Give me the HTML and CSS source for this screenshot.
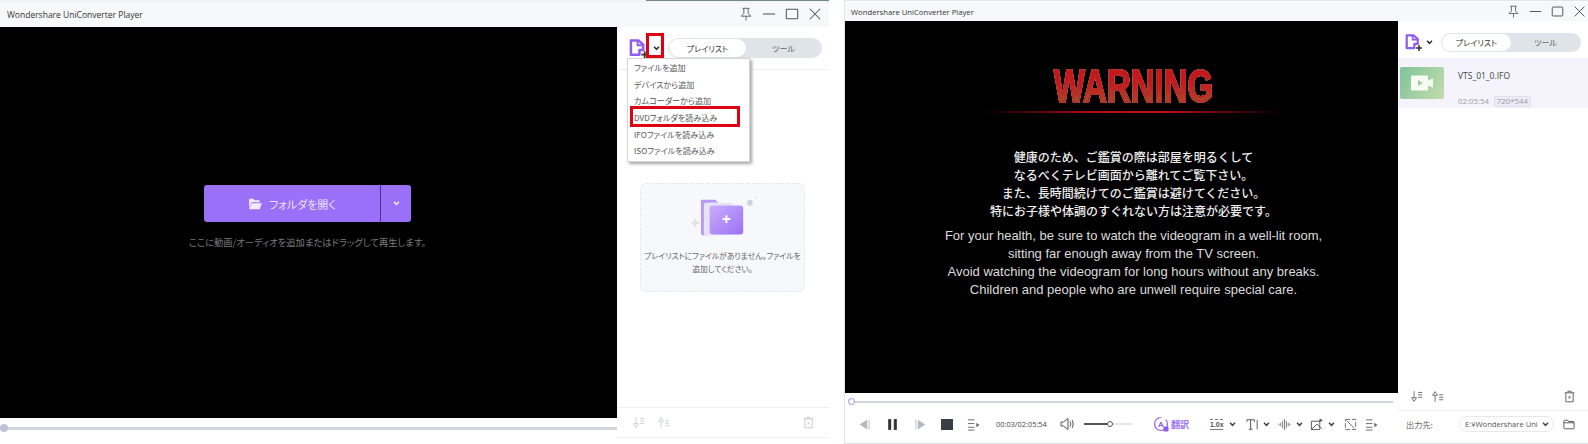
FILE: index.html
```html
<!DOCTYPE html>
<html lang="ja">
<head>
<meta charset="utf-8">
<title>Wondershare UniConverter Player</title>
<link rel="stylesheet" href="styles.css">
</head>
<body>
<svg class="sprite" aria-hidden="true">
  <symbol id="pin" viewBox="0 0 16 16"><path d="M4 1.500h8M5.500 1.500v6L2.500 10.500h11l-3-3v-6M8 10.500v5" fill="none" stroke="currentColor" stroke-width="1"/></symbol>
  <symbol id="min" viewBox="0 0 16 16"><path d="M1 8h14" stroke="currentColor" stroke-width="1.200"/></symbol>
  <symbol id="max" viewBox="0 0 16 16"><rect x="1.500" y="2.500" width="13" height="11" rx="1" fill="none" stroke="currentColor" stroke-width="1.200"/></symbol>
  <symbol id="close" viewBox="0 0 16 16"><path d="M2 2l12 12M14 2L2 14" stroke="currentColor" stroke-width="1.200"/></symbol>
  <symbol id="addfile" viewBox="0 0 20 20"><path d="M2 1.500h8l5 4.500v5.500h-4v5H2z" fill="none" stroke="#8f5cf0" stroke-width="2.600" stroke-linejoin="round"/><path d="M9 2v4.500h5" fill="none" stroke="#8f5cf0" stroke-width="2"/><path d="M13 16.500h7M16.500 13v7" stroke="#333" stroke-width="1.800"/></symbol>
  <symbol id="caret" viewBox="0 0 8 6"><path d="M1 1l3 3 3-3" fill="none" stroke="currentColor" stroke-width="1.800"/></symbol>
  <symbol id="sortdown" viewBox="0 0 16 16"><path d="M5 1.500v8M2 9.500h6L5 14z" fill="none" stroke="currentColor" stroke-width="1"/><path d="M10 3h5M10 6h5M10 9h5" stroke="currentColor" stroke-width="1"/></symbol>
  <symbol id="sortup" viewBox="0 0 16 16"><path d="M5 14.500v-8M2 6.500h6L5 2z" fill="none" stroke="currentColor" stroke-width="1"/><path d="M10 6h5M10 9h5M10 12h5" stroke="currentColor" stroke-width="1"/></symbol>
  <symbol id="trash" viewBox="0 0 16 16"><path d="M2 3.500h12M6 3.500V1.500h4v2M3.500 3.500v11h9v-11" fill="none" stroke="currentColor" stroke-width="1.100"/><path d="M6.800 7.500l2.400 3M9.200 7.500l-2.400 3" stroke="currentColor" stroke-width="1"/></symbol>
  <symbol id="list" viewBox="0 0 14 14"><path d="M1 2h7M1 6h7M1 10h7M1 13h7" stroke="currentColor" stroke-width="1"/><path d="M10 5l3.500 2.500L10 10z" fill="currentColor"/></symbol>
</svg>

<section class="window window-left">
  <div class="top-strip"><span class="strip-dark"></span></div>
  <header class="titlebar titlebar-left">
    <span class="app-title">Wondershare UniConverter Player</span>
    <div class="win-btns">
      <svg class="win-ico"><use href="#pin"/></svg>
      <svg class="win-ico"><use href="#min"/></svg>
      <svg class="win-ico"><use href="#max"/></svg>
      <svg class="win-ico"><use href="#close"/></svg>
    </div>
  </header>
  <div class="win-body">
    <div class="main main-left">
      <div class="video video-left">
        <div class="open-btn">
          <span class="open-main">
            <svg class="folder-ico" viewBox="0 0 16 14"><path d="M1 2.500c0-.800.500-1.500 1.300-1.500h3.700l1.500 1.500h5c.700 0 1 .500 1 1V5H4L1 11z" fill="#efeafc"/><path d="M3.800 6H16l-2.500 7H1z" fill="#efeafc"/></svg>
            フォルダを開く
          </span>
          <span class="open-drop"><svg class="caret-white"><use href="#caret"/></svg></span>
        </div>
        <p class="drop-hint">ここに動画/オーディオを追加またはドラッグして再生します。</p>
      </div>
      <div class="progress progress-left"><span class="knob-grey"></span></div>
    </div>
    <aside class="side side-left">
      <div class="side-head side-head-left">
        <svg class="add-ico"><use href="#addfile"/></svg>
        <svg class="caret-dark"><use href="#caret"/></svg>
        <div class="pill pill-left">
          <span class="pill-on">プレイリスト</span>
          <span class="pill-off">ツール</span>
        </div>
      </div>
      <div class="side-fill side-fill-left">
        <div class="empty-card">
          <svg class="empty-art" viewBox="0 0 70 50">
            <defs><linearGradient id="fg" x1="0" y1="0" x2="1" y2="1"><stop offset="0" stop-color="#c9aefb"/><stop offset="1" stop-color="#9a70f5"/></linearGradient></defs>
            <path d="M11 4h15l3 3h-10v34h-6c-1 0-2-1-2-2z" fill="#b79af5"/>
            <rect x="14" y="7" width="30" height="34" rx="2" fill="#e6e3f5"/>
            <rect x="20" y="10" width="35" height="30" rx="3" fill="url(#fg)"/>
            <path d="M37.500 20v8M33.500 24h8" stroke="#fff" stroke-width="2"/>
            <circle cx="62" cy="7" r="3" fill="#cfd2dc"/><circle cx="68" cy="1.500" r="1" fill="#dfe1e8"/>
            <path d="M5 24v8M1 28h8" stroke="#dfe1e8" stroke-width="2.400"/>
          </svg>
          <p class="empty-text">プレイリストにファイルがありません。ファイルを<br>追加してください。</p>
        </div>
      </div>
      <div class="side-bar side-bar-left">
        <svg class="bar-ico"><use href="#sortdown"/></svg>
        <svg class="bar-ico"><use href="#sortup"/></svg>
        <svg class="bar-ico bar-end"><use href="#trash"/></svg>
      </div>
    </aside>
  </div>
  <ul class="menu">
    <li>ファイルを追加</li>
    <li>デバイスから追加</li>
    <li>カムコーダーから追加</li>
    <li>DVDフォルダを読み込み</li>
    <li>IFOファイルを読み込み</li>
    <li>ISOファイルを読み込み</li>
  </ul>
  <span class="mark mark-caret"></span>
  <span class="mark mark-item"></span>
</section>

<section class="window window-right">
  <header class="titlebar titlebar-right">
    <span class="app-title app-title-right">Wondershare UniConverter Player</span>
    <div class="win-btns win-btns-right">
      <svg class="win-ico"><use href="#pin"/></svg>
      <svg class="win-ico"><use href="#min"/></svg>
      <svg class="win-ico"><use href="#max"/></svg>
      <svg class="win-ico"><use href="#close"/></svg>
    </div>
  </header>
  <div class="win-body">
    <div class="main main-right">
      <div class="video video-right">
        <div class="warning"><span class="warning-word">WARNING</span></div>
        <div class="warning-line"></div>
        <p class="jp">健康のため、ご鑑賞の際は部屋を明るくして<br>なるべくテレビ画面から離れてご覧下さい。<br>また、長時間続けてのご鑑賞は避けてください。<br>特にお子様や体調のすぐれない方は注意が必要です。</p>
        <p class="en">For your health, be sure to watch the videogram in a well-lit room,<br>sitting far enough away from the TV screen.<br>Avoid watching the videogram for long hours without any breaks.<br>Children and people who are unwell require special care.</p>
      </div>
      <div class="progress progress-right"><span class="knob-ring"></span></div>
      <div class="controls">
        <svg class="c-ico c-prev" viewBox="0 0 12 12"><path d="M8.500 1.500v9L1.500 6z" fill="#b5b8c2"/><rect x="9.500" y="1.500" width="1.500" height="9" fill="#d5d7de"/></svg>
        <svg class="c-ico c-pause" viewBox="0 0 12 12"><rect x="2" y="1" width="2.800" height="10" fill="#34343c"/><rect x="7.200" y="1" width="2.800" height="10" fill="#34343c"/></svg>
        <svg class="c-ico c-next" viewBox="0 0 12 12"><path d="M3.500 1.500v9l7-4.500z" fill="#b5b8c2"/><rect x="1" y="1.500" width="1.500" height="9" fill="#d5d7de"/></svg>
        <span class="c-stop"></span>
        <svg class="c-ico c-list"><use href="#list"/></svg>
        <span class="time">00:03/02:05:54</span>
        <svg class="c-ico c-vol" viewBox="0 0 14 14"><path d="M1 5h2.500L8 1.500v11L3.500 9H1z" fill="none" stroke="#555" stroke-width="1"/><path d="M10 4.500c1 1.500 1 3.500 0 5M12 3c1.500 2.500 1.500 5.500 0 8" fill="none" stroke="#555" stroke-width="1"/></svg>
        <div class="vol-track"><span class="vol-fill"></span><span class="vol-knob"></span></div>
        <svg class="c-trans" viewBox="0 0 16 16"><circle cx="8" cy="8" r="6.500" fill="none" stroke="#8f5cf0" stroke-width="1.200" stroke-dasharray="30 5"/><text x="8" y="10.500" class="c-trans-a">A</text><rect x="10.500" y="10.500" width="5" height="5" rx="1" fill="#8f5cf0"/></svg>
        <span class="trans-label">翻訳</span>
        <span class="speed">1.0x</span>
        <svg class="caret-ctrl caret-speed"><use href="#caret"/></svg>
        <svg class="c-ico c-t" viewBox="0 0 14 14"><path d="M1 2h8M5 2v10M3 12h4M1 2v2M9 2v2" fill="none" stroke="#555" stroke-width="1.100"/><path d="M12 2v10" stroke="#555"/></svg>
        <svg class="caret-ctrl"><use href="#caret"/></svg>
        <svg class="c-ico c-wave" viewBox="0 0 14 14"><path d="M1 6v2M3 5v4M5 3v8M7 1v12M9 3v8M11 5v4M13 6v2" stroke="#777" stroke-width="1"/></svg>
        <svg class="caret-ctrl caret-wave"><use href="#caret"/></svg>
        <svg class="c-ico c-crop" viewBox="0 0 14 14"><path d="M1.500 3.500h9v9h-9zM1.500 12.500l6-6 5 5" fill="none" stroke="#555" stroke-width="1"/><circle cx="11.500" cy="2.500" r="1.500" fill="#555"/></svg>
        <svg class="caret-ctrl caret-wave"><use href="#caret"/></svg>
        <svg class="c-ico c-full" viewBox="0 0 14 14"><path d="M1.500 1.500h11v11h-11z" fill="none" stroke="#666" stroke-width="1" stroke-dasharray="5 2"/><path d="M3 3l8 8" stroke="#666"/></svg>
        <svg class="c-ico c-list2"><use href="#list"/></svg>
      </div>
    </div>
    <aside class="side side-right">
      <div class="side-head side-head-right">
        <svg class="add-ico add-ico-right"><use href="#addfile"/></svg>
        <svg class="caret-dark"><use href="#caret"/></svg>
        <div class="pill pill-right">
          <span class="pill-on">プレイリスト</span>
          <span class="pill-off">ツール</span>
        </div>
      </div>
      <div class="item">
        <div class="thumb">
          <svg class="thumb-ico" viewBox="0 0 24 16"><path d="M1 1.500c0-.500.500-1 1-1h15c.500 0 1 .500 1 1v4l5-2v9l-5-2v4c0 .500-.500 1-1 1H2c-.500 0-1-.500-1-1z" fill="#f6fbf3"/><path d="M8 5l5 3-5 3z" fill="#9ccfa6"/></svg>
        </div>
        <div class="item-info">
          <div class="item-name">VTS_01_0.IFO</div>
          <div class="item-meta"><span>02:05:54</span><span class="item-tag">720*544</span></div>
        </div>
      </div>
      <div class="side-fill"></div>
      <div class="side-bar side-bar-right">
        <svg class="bar-ico"><use href="#sortdown"/></svg>
        <svg class="bar-ico"><use href="#sortup"/></svg>
        <svg class="bar-ico bar-end"><use href="#trash"/></svg>
      </div>
      <div class="output">
        <span class="out-label">出力先:</span>
        <div class="out-select"><span class="out-path">E:¥Wondershare Uni</span><svg class="caret-ctrl"><use href="#caret"/></svg></div>
        <svg class="out-folder" viewBox="0 0 14 12"><path d="M1 2c0-.500.500-1 1-1h3.500l1 1.500H12c.500 0 1 .500 1 1V10c0 .500-.500 1-1 1H2c-.500 0-1-.500-1-1zM1 4h12" fill="none" stroke="#444" stroke-width="1"/></svg>
      </div>
    </aside>
  </div>
</section>
</body>
</html>
```

FILE: styles.css
```css
* { box-sizing: border-box; }
html, body { margin: 0; padding: 0; }
body {
  width: 1588px;
  height: 444px;
  display: flex;
  overflow: hidden;
  background: #fff;
  font-family: "Noto Sans CJK JP", "Open Sans", sans-serif;
  font-feature-settings: "palt";
  color: #555;
}
.sprite { width: 0; height: 0; position: absolute; }

.window { position: relative; display: flex; flex-direction: column; }
.window-left { width: 829px; height: 441px; }
.window-right { width: 744px; height: 444px; margin-left: 15px; padding-top: 1px; border-bottom: 1px solid #dfe1ea; border-left: 1px solid #e2e4ec; border-top: 1px solid #e2e4ec; }

.top-strip { height: 3px; background: #f3f3f4; display: flex; }
.strip-dark { width: 183px; height: 1px; margin-left: 646px; background: #6d8a88; }

.titlebar { display: flex; align-items: center; justify-content: space-between; background: #f7f8fa; flex: none; }
.titlebar-left { height: 24px; padding: 0 7px 2px 7px; }
.titlebar-right { height: 19px; padding: 0 2px 0 6px; }
.app-title { font-family: "Open Sans", sans-serif; font-size: 8.500px; color: #333; white-space: nowrap; }
.app-title-right { font-size: 7.700px; }
.win-btns { display: flex; align-items: center; gap: 9px; color: #555; }
.win-ico { width: 14px; height: 14px; }
.win-btns-right { gap: 9px; }
.win-btns-right .win-ico { width: 13px; height: 13px; }

.win-body { flex: 1; display: flex; min-height: 0; }
.main { display: flex; flex-direction: column; flex: none; }
.main-left { width: 617px; }
.main-right { width: 553px; }
.video { background: #000; flex: none; display: flex; flex-direction: column; align-items: center; }
.video-left { height: 391px; padding: 158px 2px 0 0; }
.video-right { height: 372px; padding-left: 24px; }

.open-btn { display: flex; width: 207px; height: 37px; border-radius: 3px; overflow: hidden; background: #9a70f8; }
.open-main { flex: 1; display: flex; align-items: center; justify-content: center; gap: 7px; color: #e9e2fb; font-size: 11px; border-right: 1px solid #4c3487; }
.folder-ico { width: 14px; height: 12px; }
.open-drop { width: 30px; display: flex; align-items: center; justify-content: center; }
.caret-white { width: 7px; height: 5px; color: #efe9fc; }
.drop-hint { margin: 13px 0 0; font-size: 9.300px; line-height: 14px; color: #7a7a7a; white-space: nowrap; }

.progress { flex: none; position: relative; display: flex; align-items: center; }
.progress-left { height: 20px; }
.progress-left::before { content: ""; flex: 1; height: 3px; background: #d4d4e0; }
.knob-grey { position: absolute; left: 0; top: 6px; width: 8px; height: 8px; border-radius: 50%; background: #c2c2d6; }
.progress-right { height: 17px; padding: 0 5px 0 5px; }
.progress-right::before { content: ""; flex: 1; height: 2px; background: #d4d5e2; }
.knob-ring { position: absolute; left: 3px; top: 5px; width: 7px; height: 7px; border-radius: 50%; background: #fff; border: 1px solid #a58de0; }

.side { flex: 1; display: flex; flex-direction: column; background: #fff; min-width: 0; }
.side-head { display: flex; align-items: center; flex: none; }
.side-head-left { height: 43px; padding-left: 12px; border-bottom: 1px solid #eff0f3; }
.side-head-right { height: 42px; padding-left: 7px; }
.add-ico { width: 19px; height: 19px; flex: none; }
.add-ico-right { width: 17px; height: 17px; }
.caret-dark { width: 7px; height: 5px; margin-left: 5px; color: #333; flex: none; }
.side-head-right .caret-dark { margin-left: 4px; }
.pill { display: flex; background: #dfe3ea; border-radius: 11px; font-size: 8px; color: #666; flex: none; align-items: stretch; padding: 1px; }
.pill span { display: flex; align-items: center; justify-content: center; }
.pill-on { background: #fff; border-radius: 10px; color: #333; }
.pill-off { flex: 1; }
.pill-left { width: 154px; height: 20px; margin-left: 8px; }
.pill-left .pill-on { width: 77px; }
.pill-right { width: 140px; height: 19px; margin-left: 8px; }
.pill-right .pill-on { width: 69px; }

.side-fill { flex: 1; min-height: 0; }
.side-fill-left { padding: 113px 24px 0 23px; }
.empty-card { height: 109px; background: #f7f8fb; border: 1px dashed #e5e7ee; border-radius: 6px; display: flex; flex-direction: column; align-items: center; padding-top: 12px; }
.empty-art { width: 70px; height: 48px; margin-left: 3px; flex: none; }
.empty-text { margin: 5px 0 0; font-size: 7.800px; line-height: 13px; text-align: center; color: #666; white-space: nowrap; }

.side-bar { flex: none; display: flex; align-items: center; }
.side-bar-left { height: 31px; margin-bottom: 3px; gap: 12px; padding: 0 14px 0 15px; border-top: 1px solid #eff0f3; border-bottom: 1px solid #eff0f3; color: #c2c5ce; }
.side-bar-right { height: 27px; gap: 8px; padding: 0 12px 2px 12px; border-bottom: 1px solid #eff0f3; color: #555; }
.bar-ico { width: 13px; height: 13px; flex: none; }
.bar-end { margin-left: auto; }

.menu { position: absolute; left: 627px; top: 58px; width: 123px; height: 104px; margin: 0; padding: 1px 0 0; list-style: none; background: #fff; border: 1px solid #d6d6d6; box-shadow: 2px 2px 3px rgba(0,0,0,.35); z-index: 2; }
.menu li { height: 16.700px; line-height: 16.700px; padding-left: 6px; font-size: 8.100px; color: #555; white-space: nowrap; }
.mark { position: absolute; border: 3px solid #e00012; z-index: 3; }
.mark-caret { left: 646px; top: 33px; width: 18px; height: 25px; }
.mark-item { left: 630px; top: 106px; width: 110px; height: 21px; }

.warning { margin-top: 46px; height: 37px; width: 100%; display: flex; justify-content: center; }
.warning-word {
  font-family: "Liberation Sans", sans-serif;
  font-weight: 700;
  font-size: 33px;
  line-height: 37px;
  display: block;
  transform: scaleY(1.420);
  background: linear-gradient(#c5151c 0%, #c5191d 45%, #a84a2c 82%, #e8e0dc 90%);
  -webkit-background-clip: text;
  background-clip: text;
  color: transparent;
  -webkit-text-stroke: 1px #b5271f;
  filter: drop-shadow(0 .7px 0 #d8d0cc);
}
.warning-line { width: 300px; height: 2px; margin-top: 7px; background: linear-gradient(90deg, transparent, #b00c12 35%, #c40f15 60%, transparent); }
.jp { margin: 35px 0 0; font-feature-settings: normal; font-size: 12px; font-weight: 500; line-height: 18px; color: #eee; text-align: center; white-space: nowrap; }
.en { margin: 7px 0 0; font-family: "Liberation Sans", sans-serif; font-size: 13px; line-height: 18px; color: #dcdcdc; text-align: center; white-space: nowrap; }

.controls { flex: 1; display: flex; align-items: center; background: #fff; padding: 0 0 5px 13px; }
.c-ico { width: 13px; height: 13px; flex: none; color: #666; }
.c-pause { margin-left: 15px; }
.c-next { margin-left: 15px; }
.c-stop { width: 12px; height: 11px; background: #3c3c46; margin-left: 14px; flex: none; }
.c-list { margin-left: 14px; }
.time { margin-left: 16px; font-family: "Open Sans", sans-serif; font-size: 7.400px; color: #444; width: 64px; flex: none; white-space: nowrap; }
.c-vol { width: 14px; height: 14px; }
.vol-track { position: relative; width: 49px; height: 2px; margin-left: 10px; background: #e6e7ec; flex: none; }
.vol-fill { position: absolute; left: 0; top: 0; width: 25px; height: 2px; background: #555; }
.vol-knob { position: absolute; left: 23px; top: -2px; width: 6px; height: 6px; border-radius: 50%; background: #fff; border: 1px solid #555; }
.c-trans { width: 16px; height: 16px; margin-left: 20px; flex: none; }
.c-trans-a { font-size: 8px; fill: #8f5cf0; text-anchor: middle; font-family: "Liberation Sans", sans-serif; font-weight: 700; }
.trans-label { margin-left: 2px; font-size: 9px; font-weight: 700; color: #9a70f0; white-space: nowrap; width: 18px; flex: none; }
.speed { margin-left: 21px; font-family: "Liberation Sans", sans-serif; font-size: 7px; font-weight: 700; color: #555; border-top: 1px dashed #777; border-bottom: 1px solid #777; line-height: 9px; width: 13px; flex: none; white-space: nowrap; }
.caret-ctrl { width: 7px; height: 5px; color: #444; flex: none; margin-left: 4px; }
.caret-speed { margin-left: 6px; }
.caret-wave { margin-left: 5px; }
.c-t { margin-left: 10px; }
.c-wave { margin-left: 8px; }
.c-crop { margin-left: 7px; }
.c-full { margin-left: 9px; }
.c-list2 { margin-left: 8px; }

.item { height: 50px; flex: none; margin-top: -5px; background: #f5f3fb; display: flex; align-items: center; padding-left: 2px; }
.thumb { width: 44px; height: 32px; border-radius: 2px; background: linear-gradient(120deg, #7fc39b, #c5dcae); display: flex; align-items: center; justify-content: center; flex: none; }
.thumb-ico { width: 24px; height: 16px; }
.item-info { margin-left: 14px; padding-top: 10px; }
.item-name { font-family: "Open Sans", sans-serif; font-size: 8.500px; color: #444; line-height: 12px; }
.item-meta { display: flex; align-items: center; gap: 5px; margin-top: 14px; font-family: "Open Sans", sans-serif; font-size: 7.800px; color: #9a9aa6; }
.item-tag { background: #eceaf5; border: 1px solid #e2e0ee; border-radius: 2px; padding: 0 2px; line-height: 9px; }

.output { flex: none; height: 32px; display: flex; align-items: center; padding: 0 0 6px 8px; }
.out-label { font-size: 8.200px; color: #666; width: 53px; flex: none; }
.out-select { width: 95px; height: 16px; border: 1px solid #e7e8ee; border-radius: 8px; display: flex; align-items: center; padding-left: 5px; flex: none; }
.out-path { font-family: "Open Sans", sans-serif; font-size: 7.600px; color: #555; white-space: nowrap; width: 74px; flex: none; }
.out-select .caret-ctrl { margin-left: 3px; }
.out-folder { width: 12px; height: 11px; margin-left: 9px; flex: none; }
```
